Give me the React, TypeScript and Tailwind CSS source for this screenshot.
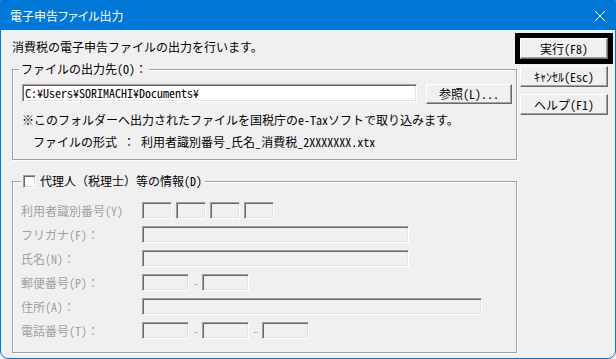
import React from 'react';

// Latin runs get half-width glyphs, like the MS Gothic UI font in the dialog
function Txt({ children }: { children: string }) {
  const parts = children.split(/([\x20-\x7E¥]+)/);
  return (
    <>
      {parts.map((p, i) =>
        i % 2 === 1 ? (
          <span key={i} className="[font-feature-settings:'hwid']">{p}</span>
        ) : (
          p
        )
      )}
    </>
  );
}

const sunken =
  'border border-t-[#a0a0a0] border-l-[#a0a0a0] border-b-white border-r-white shadow-[inset_1px_1px_0_#696969,inset_-1px_-1px_0_#e3e3e3]';
const raised =
  'border border-t-white border-l-white border-b-[#696969] border-r-[#696969] shadow-[inset_-1px_-1px_0_#a0a0a0] bg-[#f0f0f0] flex items-center justify-center';
const etched =
  'm-0 p-0 min-w-0 border border-[#a0a0a0] shadow-[1px_1px_0_white,inset_1px_1px_0_white]';

const Box = ({ w }: { w: string }) => <div className={`${w} h-[17px] ${sunken}`} />;
const Dash = () => <span className="w-[13px] text-center">-</span>;

const Row = ({ label, children }: { label: string; children: React.ReactNode }) => (
  <div className="h-[17px] flex items-center">
    <span className="w-[121px] whitespace-nowrap">
      <Txt>{label}</Txt>
    </span>
    {children}
  </div>
);

export default function App() {
  return (
    <div className="w-[616px] h-[359px] flex flex-col border border-[#0078d7] rounded-b-[8px] overflow-hidden bg-[#f0f0f0] text-[12px] leading-[14px] text-black font-['Noto_Sans_CJK_JP',sans-serif]">
      {/* Title bar */}
      <div className="h-[29px] shrink-0 bg-[#0078d7] flex items-center justify-between pl-[9px] pr-[10px] text-white">
        <span className="[font-feature-settings:'palt']">電子申告ファイル出力</span>
        <svg width="10" height="10" viewBox="0 0 10 10" fill="none" stroke="white" strokeWidth="1">
          <path d="M0 0L10 10M10 0L0 10" />
        </svg>
      </div>

      <div className="flex-1 flex">
        {/* Left column */}
        <div className="w-[516px] pl-[11px] pt-[10px]">
          <p className="whitespace-nowrap">消費税の電子申告ファイルの出力を行います。</p>

          <fieldset className={`${etched} mt-[8px]`}>
            <legend className="ml-[6px] px-[2px] bg-[#f0f0f0] whitespace-nowrap">
              <Txt>ファイルの出力先(O)：</Txt>
            </legend>
            <div className="pl-[9px] pt-[8px] pb-[10px]">
              <div className="flex items-start">
                <div className={`w-[395px] h-[18px] bg-white pl-[2px] flex items-center ${sunken}`}>
                  <span>
                    <Txt>C:¥Users¥SORIMACHI¥Documents¥</Txt>
                  </span>
                </div>
                <button className={`ml-[9px] w-[86px] h-[20px] ${raised}`}>
                  <span>
                    <Txt>参照(L)...</Txt>
                  </span>
                </button>
              </div>
              <p className="mt-[9px] whitespace-nowrap">
                <Txt>※このフォルダーへ出力されたファイルを国税庁のe-Taxソフトで取り込みます。</Txt>
              </p>
              <p className="mt-[8px] pl-[11px] whitespace-pre">
                <Txt>ファイルの形式 ： 利用者識別番号_氏名_消費税_2XXXXXXX.xtx</Txt>
              </p>
            </div>
          </fieldset>

          <fieldset className={`${etched} mt-[14px]`}>
            <legend className="ml-[8px] pl-[2px] pr-[3px] bg-[#f0f0f0] flex items-center gap-[4px] whitespace-nowrap">
              <span className={`w-[13px] h-[13px] bg-white ${sunken}`} />
              <span>
                <Txt>代理人（税理士）等の情報(D)</Txt>
              </span>
            </legend>
            <div className="pl-[8px] pt-[14px] pb-[13px] flex flex-col gap-[7px] text-[#a0a0a0]">
              <Row label="利用者識別番号(Y)">
                <div className="flex gap-[4px]">
                  <Box w="w-[30px]" />
                  <Box w="w-[30px]" />
                  <Box w="w-[30px]" />
                  <Box w="w-[30px]" />
                </div>
              </Row>
              <Row label="フリガナ(F)：">
                <Box w="w-[267px]" />
              </Row>
              <Row label="氏名(N)：">
                <Box w="w-[267px]" />
              </Row>
              <Row label="郵便番号(P)：">
                <Box w="w-[47px]" />
                <Dash />
                <Box w="w-[47px]" />
              </Row>
              <Row label="住所(A)：">
                <Box w="w-[340px]" />
              </Row>
              <Row label="電話番号(T)：">
                <Box w="w-[47px]" />
                <Dash />
                <Box w="w-[47px]" />
                <Dash />
                <Box w="w-[47px]" />
              </Row>
            </div>
          </fieldset>
        </div>

        {/* Right column */}
        <div className="pl-[3px] pt-[8px] flex flex-col gap-[7px]">
          <button className={`w-[88px] h-[21px] outline-[5px] outline-solid outline-black ${raised}`}>
            <span>
              <Txt>実行(F8)</Txt>
            </span>
          </button>
          <button className={`w-[88px] h-[21px] ${raised}`}>
            <span>
              <Txt>ｷｬﾝｾﾙ(Esc)</Txt>
            </span>
          </button>
          <button className={`w-[88px] h-[21px] ${raised}`}>
            <span>
              <Txt>ヘルプ(F1)</Txt>
            </span>
          </button>
        </div>
      </div>
    </div>
  );
}
